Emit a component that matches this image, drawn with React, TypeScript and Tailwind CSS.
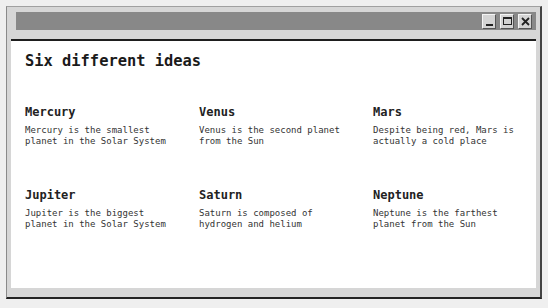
const planets = [
  { name: "Mercury", text: ["Mercury is the smallest", "planet in the Solar System"] },
  { name: "Venus", text: ["Venus is the second planet", "from the Sun"] },
  { name: "Mars", text: ["Despite being red, Mars is", "actually a cold place"] },
  { name: "Jupiter", text: ["Jupiter is the biggest", "planet in the Solar System"] },
  { name: "Saturn", text: ["Saturn is composed of", "hydrogen and helium"] },
  { name: "Neptune", text: ["Neptune is the farthest", "planet from the Sun"] },
];

function WinButton({ children }: { children: React.ReactNode }) {
  return (
    <div className="w-[14px] h-[15px] bg-[#d4d4d4] border-t border-l border-t-[#f4f4f4] border-l-[#f4f4f4] border-r border-b border-r-[#555] border-b-[#555] flex items-center justify-center">
      {children}
    </div>
  );
}

export default function App() {
  return (
    <div
      className="w-[548px] h-[308px] bg-[#efefef] pt-[6px] pl-[6px]"
      style={{ fontFamily: '"DejaVu Sans Mono", "Liberation Mono", monospace' }}
    >
      <div className="w-[536px] h-[293px] bg-[#d6d6d6] border-t border-l border-t-[#a0a0a0] border-l-[#8a8a8a] border-r-2 border-b-2 border-r-[#444] border-b-[#222] flex flex-col">
        {/* Title bar */}
        <div className="mt-[5px] ml-[9px] mr-[4px] h-[18px] bg-[#888888] flex items-center justify-end gap-[4px] pr-[4px]">
          <WinButton>
            <div className="w-[7px] h-[2px] bg-[#222] mt-[8px]" />
          </WinButton>
          <WinButton>
            <div className="w-[9px] h-[8px] border border-[#222] border-t-2" />
          </WinButton>
          <WinButton>
            <svg width="9" height="9" viewBox="0 0 9 9">
              <path d="M1 1 L8 8 M8 1 L1 8" stroke="#222" strokeWidth="1.8" />
            </svg>
          </WinButton>
        </div>

        {/* Content */}
        <div className="mt-[9px] mx-[4px] mb-[9px] flex-1 bg-white border-t-2 border-t-[#1e1e1e] pl-[14px] pt-[10px]">
          <h1 className="text-[15.4px] leading-[20px] font-bold text-[#1a1a1a]">Six different ideas</h1>
          <div className="grid grid-cols-[174px_174px_1fr] gap-y-[40px] mt-[33px]">
            {planets.map((p) => (
              <div key={p.name}>
                <h2 className="text-[12px] leading-[16px] font-bold text-[#222]">{p.name}</h2>
                <p className="mt-[5px] text-[9px] leading-[11px] text-[#333]">
                  {p.text[0]}
                  <br />
                  {p.text[1]}
                </p>
              </div>
            ))}
          </div>
        </div>
      </div>
    </div>
  );
}
